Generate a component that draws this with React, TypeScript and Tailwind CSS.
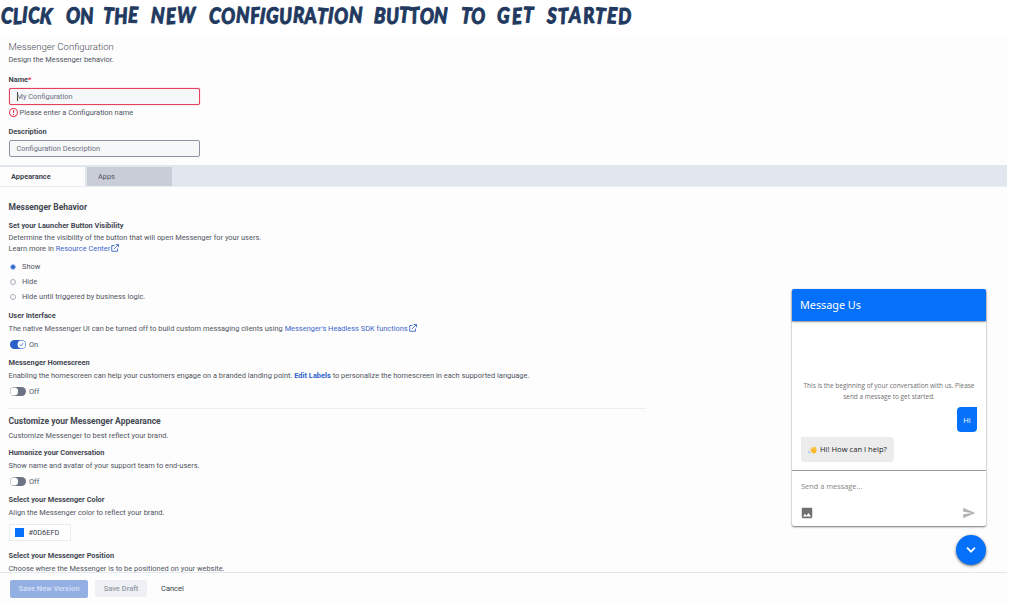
import React from "react";
import { MdImage, MdSend } from "react-icons/md";

function ExternalIcon() {
  return (
    <svg viewBox="0 0 16 16" className="mb-[2px] ml-[1px] h-[8px] w-[8px] shrink-0" fill="none" stroke="#3f68c8" strokeWidth="1.8">
      <path d="M7 3H1.5v11.5H13V9" />
      <path d="M9.5 1h5.5v5.5M15 1 6 10" />
    </svg>
  );
}

function Label({ className = "", children }: { className?: string; children: React.ReactNode }) {
  return (
    <div className={`flex h-[11px] items-center whitespace-pre leading-[11px] font-bold text-[#434852] ${className}`}>
      {children}
    </div>
  );
}

function Line({ className = "", children }: { className?: string; children: React.ReactNode }) {
  return (
    <div className={`flex h-[11px] items-center whitespace-pre text-[7.43px] leading-[11px] text-[#50555f] ${className}`}>
      {children}
    </div>
  );
}

function Radio({ className, label, checked = false }: { className: string; label: string; checked?: boolean }) {
  return (
    <Line className={className}>
      <span
        className={`ml-[1.5px] mr-[6px] flex h-[6px] w-[6px] items-center justify-center rounded-full border ${
          checked ? "border-[#9dbcf0]" : "border-[#a9adb8]"
        }`}
      >
        {checked && <span className="h-[4px] w-[4px] shrink-0 rounded-full bg-[#2a60c8]" />}
      </span>
      {label}
    </Line>
  );
}

function Toggle({ className, on = false }: { className: string; on?: boolean }) {
  return (
    <Line className={className}>
      <svg viewBox="0 0 16 9" className="ml-[1.5px] mr-[3px] h-[9px] w-[16px]">
        <rect width="16" height="9" rx="4.5" fill={on ? "#2a60c8" : "#6b7384"} />
        <circle cx={on ? 11.5 : 4.2} cy="4.5" r="3.9" fill="#fff" />
        {on && <path d="m9.8 4.6 1.2 1.2 2.2-2.6" fill="none" stroke="#2a60c8" strokeWidth=".8" />}
      </svg>
      {on ? "On" : "Off"}
    </Line>
  );
}

const TITLE_WORDS = [
  { text: "CLICK", box: "w-[65px] tracking-[0.5px]" },
  { text: "ON", box: "w-[37px]" },
  { text: "THE", box: "w-[48px] tracking-[0.6px]" },
  { text: "NEW", box: "w-[58px] tracking-[1.3px]" },
  { text: "CONFIGURATION", box: "w-[165px] tracking-[0.6px]" },
  { text: "BUTTON", box: "w-[87px] tracking-[0.2px]" },
  { text: "TO", box: "w-[36px]" },
  { text: "GET", box: "w-[50px] tracking-[2px]" },
  { text: "STARTED", box: "w-[90px] tracking-[1.2px]" },
];

const LETTER_TILT = [
  "inline-block rotate-[3deg]",
  "inline-block -rotate-[3deg] translate-y-[0.5px]",
  "inline-block rotate-[1deg] -translate-y-[0.5px]",
  "inline-block -rotate-[5deg]",
  "inline-block rotate-[4deg] translate-y-[0.5px]",
];

function Title() {
  return (
    <h1 className="flex h-[37px] items-start bg-white pt-[3px] pl-px font-['Lato'] text-[18.5px] leading-[24px] font-black text-[#21395f] italic [-webkit-text-stroke:0.8px_#21395f] [paint-order:stroke] [stroke-linejoin:round]">
      {TITLE_WORDS.map(({ text, box }) => (
        <span key={text} className={`block origin-center scale-y-[1.18] whitespace-nowrap ${box}`}>
          {[...text].map((letter, i) => (
            <span key={i} className={LETTER_TILT[i % LETTER_TILT.length]}>
              {letter}
            </span>
          ))}
        </span>
      ))}
    </h1>
  );
}

function Messenger() {
  return (
    <aside className="absolute top-[289px] left-[792px] w-[194px] font-['Open_Sans',sans-serif]">
      <div className="h-[237px] rounded-[2px] bg-white shadow-[0_1px_2px_rgba(0,0,0,0.55)]">
        <div className="flex h-8 items-center rounded-t-[2px] bg-[#0571fa] pl-2 font-['Noto_Sans',sans-serif] text-[10.8px] text-white shadow-[0_1px_2px_rgba(0,0,0,0.45)]">
          Message Us
        </div>
        <div className="flex h-[150px] flex-col border-b border-[#9a9a9a] px-[9px]">
          <p className="mt-[59px] -mx-2 text-center text-[6.45px] leading-[11px] whitespace-nowrap text-[#6f6f6f]">
            This is the beginning of your conversation with us. Please
            <br />
            send a message to get started.
          </p>
          <div className="mt-[5px] flex h-[25px] w-[20px] items-center justify-center self-end rounded-[4px] rounded-tr-none bg-[#0571fa] pt-[2px] text-[7.5px] text-white">
            Hi
          </div>
          <div className="mt-[5px] flex h-[25px] w-[93px] items-center rounded-[4px] rounded-tl-none bg-[#ececec] pt-px pl-[7px] text-[7.6px] whitespace-nowrap text-[#222]">
            <svg viewBox="0 0 18 16" className="mr-[3px] h-[8px] w-[9px] shrink-0">
              <path d="M6 7 9 10 M7.500 4l3 4 M11 2.500l2 5" stroke="#fbb829" strokeWidth="2.4" strokeLinecap="round" />
              <path d="M6 10c2-3 5-4 7-4l1-5c2 0 3 5 3 8 0 4-2 6-5 6s-5-2-6-5z" fill="#fbb829" />
              <path d="M1.500 10c0 2 1 3.500 3 4.500" fill="none" stroke="#6faee0" strokeWidth="2" />
            </svg>
            Hi! How can I help?
          </div>
        </div>
        <div className="flex h-[55px] flex-col pt-[9px] pr-[10px] pl-[9px]">
          <div className="h-[13px] text-[7.4px] leading-[13px] text-[#858585]">Send a message...</div>
          <div className="mt-[13px] flex items-center justify-between">
            <MdImage className="h-[14px] w-[14px] -translate-x-px text-[#6f6f6f]" />
            <MdSend className="h-[14px] w-[14px] text-[#b5b5b5]" />
          </div>
        </div>
      </div>
      <button className="mt-[9px] ml-auto flex h-[30px] w-[30px] items-center justify-center rounded-full bg-[#0571fa] shadow-[0_1px_3px_rgba(0,0,0,0.6)]">
        <svg viewBox="0 0 10 6" className="h-[6px] w-[10px]" fill="none" stroke="#fff" strokeWidth="1.7">
          <path d="m1 .7 4 4 4-4" />
        </svg>
      </button>
    </aside>
  );
}

export default function App() {
  return (
    <div className="relative h-[606px] w-[1009px] overflow-hidden bg-white font-['Roboto',sans-serif]">
      <Title />
      <div className="flex h-[569px] w-[1007px] flex-col bg-[#fdfdfd]">
        <header className="h-[128px] pl-[8.5px]">
          <div className="pt-[3px] text-[9.55px] leading-[13px] font-light text-[#444a55]">Messenger Configuration</div>
          <Line className="mt-[1px]">Design the Messenger behavior.</Line>
          <Label className="mt-[9px] text-[7.4px]">
            Name<span className="text-[#ea2f4c]">*</span>
          </Label>
          <div className="mt-[3px] flex h-[17px] w-[191px] items-center rounded-[2px] border border-[#e5405d] bg-[#f6f7f9] pl-[7px] text-[7.4px] text-[#6b7180] shadow-[0_0_1px_#e5405d]">
            <span className="h-[9px] w-px bg-[#333]" />
            <span className="-ml-px">My Configuration</span>
          </div>
          <Line className="mt-[2px]">
            <svg viewBox="0 0 16 16" className="mr-[2px] h-[9px] w-[9px]" fill="none" stroke="#ea2f4c" strokeWidth="1.8">
              <circle cx="8" cy="8" r="7" />
              <path d="M8 3.5v5.5M8 10.5v2" />
            </svg>
            Please enter a Configuration name
          </Line>
          <Label className="mt-[8px] text-[7.4px]">Description</Label>
          <div className="mt-[3px] flex h-[17px] w-[191px] items-center rounded-[2px] border border-[#8d93a0] bg-[#f6f7f9] pl-[7px] text-[7.4px] text-[#6b7180]">
            Configuration Description
          </div>
        </header>
        <nav className="flex h-[22px] gap-[2px] border-b border-[#e8ebf1] bg-[#e2e6ee] pt-[2px] text-[7.4px]">
          <div className="flex w-[85px] items-center bg-[#fdfdfd] pl-[11px] font-bold text-[#434852]">Appearance</div>
          <div className="flex w-[85px] items-center bg-[#c8cdd8] pl-[11px] text-[#50555f]">Apps</div>
        </nav>
        <main className="h-[385px] overflow-hidden pl-[8.5px]">
          <Label className="mt-[15px] text-[8.5px]">Messenger Behavior</Label>
          <Label className="mt-[7px] text-[7.4px]">Set your Launcher Button Visibility</Label>
          <Line className="mt-[1px]">Determine the visibility of the button that will open Messenger for your users.</Line>
          <Line>
            Learn more in <span className="text-[#3f68c8]">Resource Center</span>
            <ExternalIcon />
          </Line>
          <Radio className="mt-[7px]" label="Show" checked />
          <Radio className="mt-[4px]" label="Hide" />
          <Radio className="mt-[4px]" label="Hide until triggered by business logic." />
          <Label className="mt-[8px] text-[7.4px]">User Interface</Label>
          <Line className="mt-[2px]">
            The native Messenger UI can be turned off to build custom messaging clients using{" "}
            <span className="text-[#3f68c8]">Messenger's Headless SDK functions</span>
            <ExternalIcon />
          </Line>
          <Toggle className="mt-[5px]" on />
          <Label className="mt-[7px] text-[7.4px]">Messenger Homescreen</Label>
          <Line className="mt-[2px]">
            Enabling the homescreen can help your customers engage on a branded landing point.{" "}
            <span className="font-bold text-[#2f62c8]">Edit Labels</span> to personalize the homescreen in each supported language.
          </Line>
          <Toggle className="mt-[5px]" />
          <hr className="mt-[11px] w-[637px] border-[#ebeef2]" />
          <Label className="mt-[7px] text-[8.5px]">Customize your Messenger Appearance</Label>
          <Line className="mt-[3px]">Customize Messenger to best reflect your brand.</Line>
          <Label className="mt-[6px] text-[7.4px]">Humanize your Conversation</Label>
          <Line className="mt-[2px]">Show name and avatar of your support team to end-users.</Line>
          <Toggle className="mt-[5px]" />
          <Label className="mt-[7px] text-[7.4px]">Select your Messenger Color</Label>
          <Line className="mt-[2px]">Align the Messenger color to reflect your brand.</Line>
          <div className="mt-[6px] flex h-[17px] w-[62px] items-center gap-[5px] border border-[#e8ebf2] bg-white pl-[5px] text-[7.4px] text-[#3a3f4a]">
            <span className="h-[9px] w-[9px] bg-[#0571fa]" />
            #0D6EFD
          </div>
          <Label className="mt-[9px] text-[7.4px]">Select your Messenger Position</Label>
          <Line className="mt-[2px]">Choose where the Messenger is to be positioned on your website.</Line>
        </main>
        <footer className="flex h-[34px] items-start border-t border-[#e1e8f0] pt-[7px] pl-[10px] text-[7.5px]">
          <button className="h-[18px] w-[78px] rounded-[2px] bg-[#94afe3] pb-px font-bold text-[#d0dcf4]">Save New Version</button>
          <button className="ml-[7px] h-[17px] w-[52px] rounded-[2px] bg-[#eef0f4] font-medium text-[#949aa6]">Save Draft</button>
          <button className="ml-[14px] h-[18px] text-[#3a3f4a]">Cancel</button>
        </footer>
      </div>
      <Messenger />
    </div>
  );
}
